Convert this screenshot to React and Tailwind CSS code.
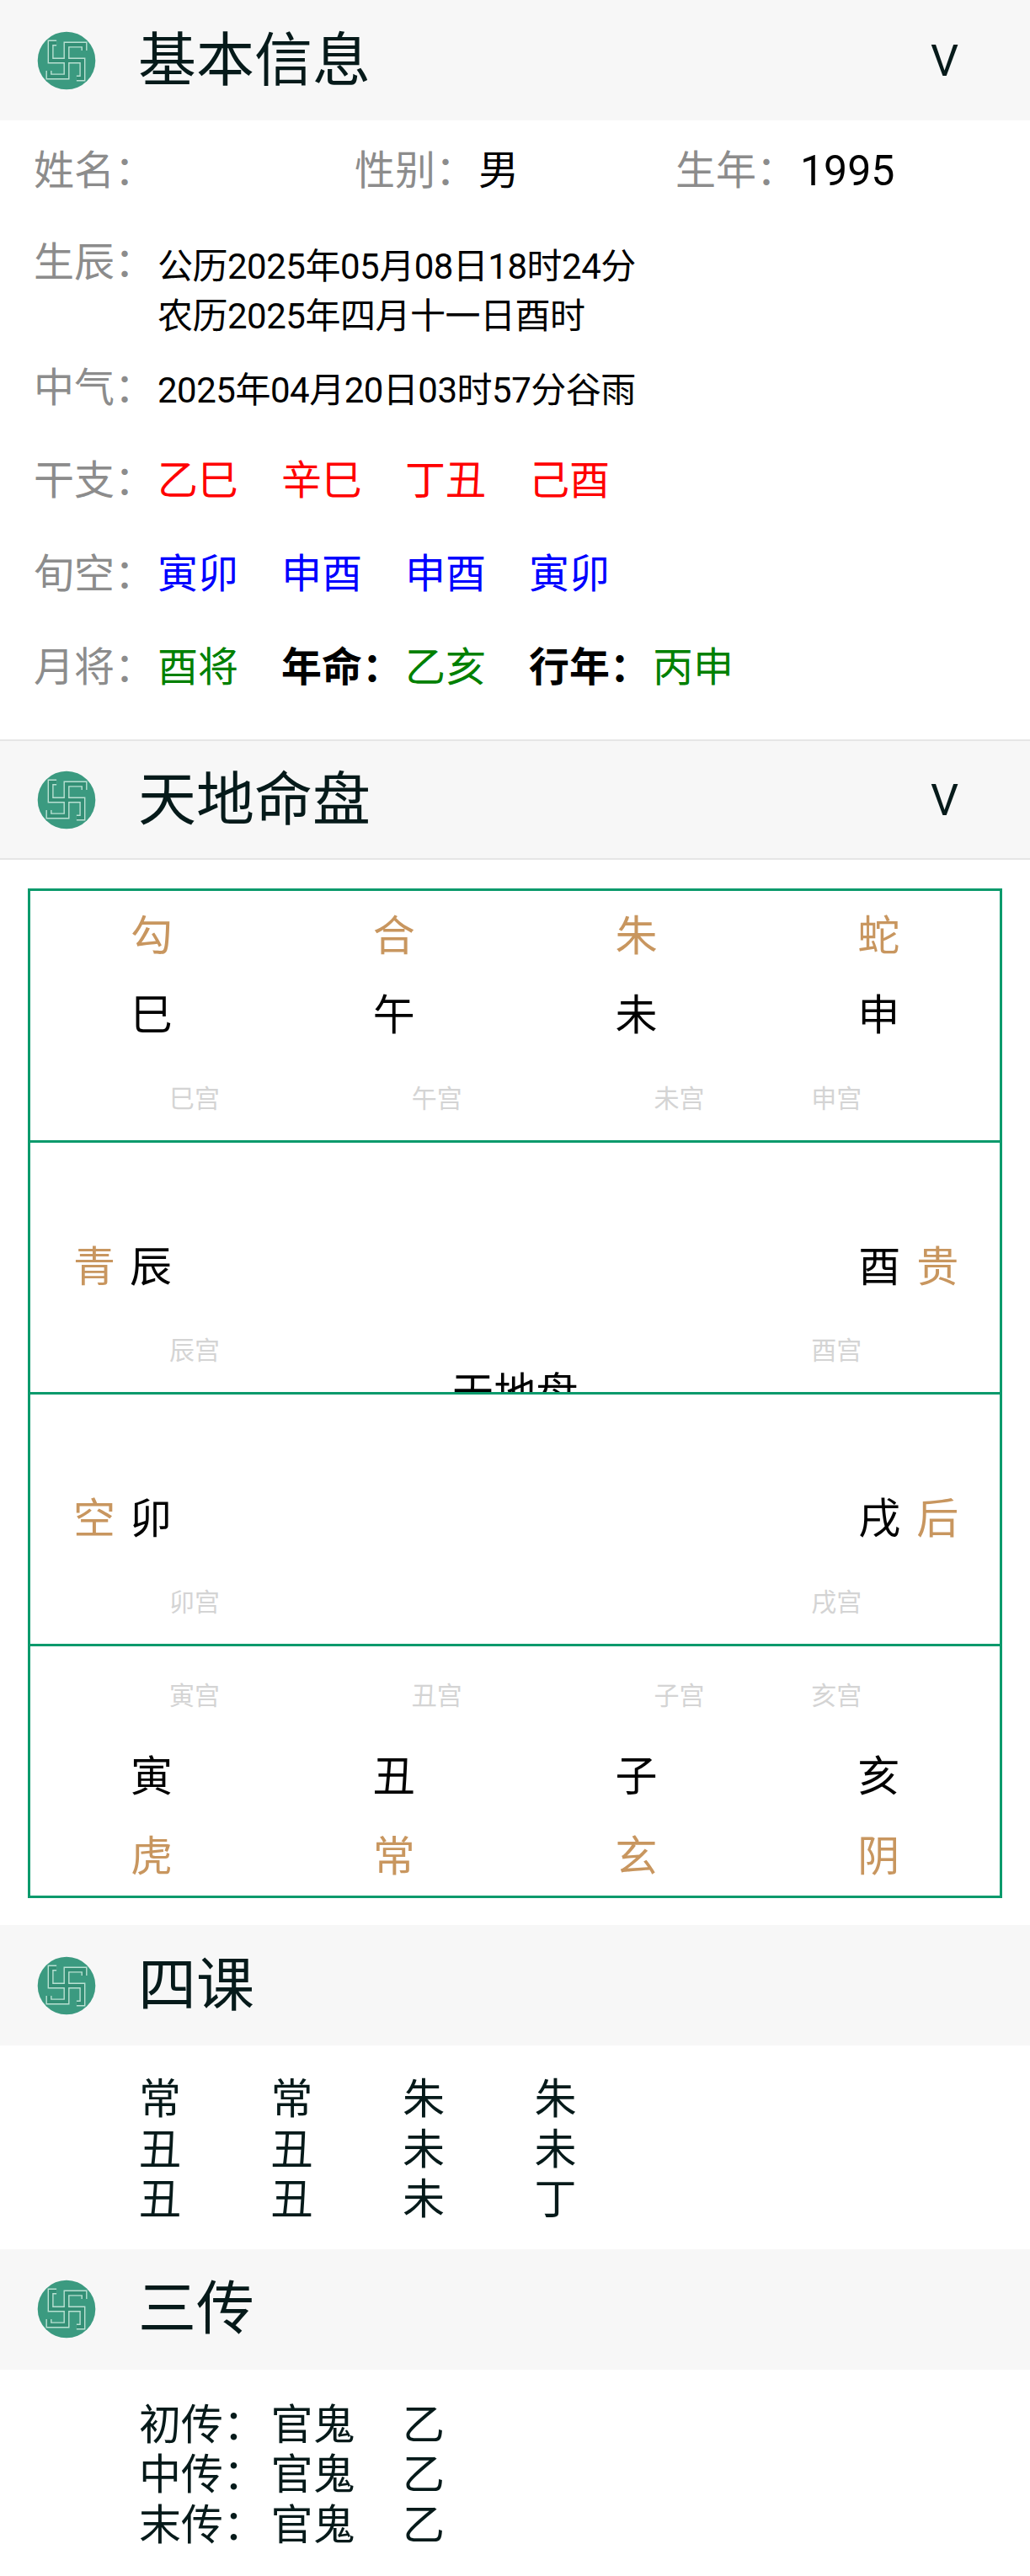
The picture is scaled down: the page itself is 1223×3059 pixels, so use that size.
const Logo = () => (
  <svg viewBox="-50 -50 100 100" className="w-[72px] h-[70px] shrink-0 blur-[0.7px]">
    <circle cx="0" cy="0" r="49" fill="#3b9a80" />
    {[0, 90, 180, 270].map((r) => (
      <path
        key={r}
        transform={`rotate(${r})`}
        d="M0 0 L0 -27 L30 -27 L30 -17"
        fill="none"
        stroke="#b9e0d2"
        strokeWidth="10"
      />
    ))}
    {[0, 90, 180, 270].map((r) => (
      <path
        key={r}
        transform={`rotate(${r})`}
        d="M0 0 L0 -27 L30 -27 L30 -17"
        fill="none"
        stroke="#338f75"
        strokeWidth="6"
      />
    ))}
  </svg>
);

const Header = ({ title, arrow, border }) => (
  <div
    className={`flex items-center h-[143px] bg-[#f7f7f7] pl-[43px] pr-[85px] text-[#061a1a] ${
      border ? "border-y-2 border-[#e6e6e6]" : ""
    }`}
  >
    <Logo />
    <div className="ml-[49px] mt-[2px] text-[69px] leading-[80px]">{title}</div>
    {arrow && <div className="ml-auto mt-[3px] text-[52px] leading-[60px]">V</div>}
  </div>
);

const Label = ({ children }) => (
  <div className="text-[48px] leading-[60px] text-[#8c8c8c]">{children}</div>
);

const ValueRow = ({ label, cells }) => (
  <div className="grid grid-cols-[147px_repeat(5,147px)] text-[48px] leading-[60px]">
    <Label>{label}</Label>
    {cells.map((c, i) => (
      <div key={i} className={c.cls}>
        {c.text}
      </div>
    ))}
  </div>
);

const red = "text-[#ff0000]";
const blue = "text-[#0000ff]";
const green = "text-[#008000]";
const strong = "font-bold text-black";

const Tall = ({ children, cls }) => (
  <div className={`h-[96px] leading-[96px] text-[50px] ${cls}`}>{children}</div>
);

const Palace = ({ name, right }) => (
  <div
    className={`h-[40px] leading-[40px] text-[30px] text-[#d4d4d4] ${
      right ? "pl-[64px]" : "pl-[165px]"
    }`}
  >
    {name}宫
  </div>
);

const tan = "text-[#c8965f]";

const TopCell = ({ god, branch, right }) => (
  <div className="pt-[6px]">
    <Tall cls={`text-center ${tan}`}>{god}</Tall>
    <Tall cls="text-center -mt-[2px]">{branch}</Tall>
    <div className="mt-[31px]">
      <Palace name={branch} right={right} />
    </div>
  </div>
);

const BottomCell = ({ god, branch, right }) => (
  <div className="pt-[39px]">
    <Palace name={branch} right={right} />
    <div className="mt-[28px]">
      <Tall cls="text-center">{branch}</Tall>
      <Tall cls={`text-center -mt-[1px] ${tan}`}>{god}</Tall>
    </div>
  </div>
);

const LeftCell = ({ god, branch }) => (
  <div className="pt-[100px]">
    <div className="flex gap-[17px] pl-[51px]">
      <Tall cls={tan}>{god}</Tall>
      <Tall cls="">{branch}</Tall>
    </div>
    <div className="mt-[31px]">
      <Palace name={branch} />
    </div>
  </div>
);

const RightCell = ({ god, branch }) => (
  <div className="pt-[100px]">
    <div className="flex gap-[19px] pl-[120px]">
      <Tall cls="">{branch}</Tall>
      <Tall cls={tan}>{god}</Tall>
    </div>
    <div className="mt-[31px]">
      <Palace name={branch} right />
    </div>
  </div>
);

const rowCls =
  "grid grid-cols-4 h-[299px] overflow-hidden bg-white border-x-3 border-t-3 border-[#0a9a6c]";

const Board = () => (
  <div className="mx-[33px] mt-[34px]">
    <div className={rowCls}>
      <TopCell god="勾" branch="巳" />
      <TopCell god="合" branch="午" />
      <TopCell god="朱" branch="未" />
      <TopCell god="蛇" branch="申" right />
    </div>
    <div className={rowCls}>
      <LeftCell god="青" branch="辰" />
      <div className="col-span-2 pt-[268px] text-center text-[50px] leading-[60px]">天地盘</div>
      <RightCell god="贵" branch="酉" />
    </div>
    <div className={rowCls}>
      <LeftCell god="空" branch="卯" />
      <div className="col-span-2" />
      <RightCell god="后" branch="戌" />
    </div>
    <div className={`${rowCls} h-[302px] border-b-3`}>
      <BottomCell god="虎" branch="寅" />
      <BottomCell god="常" branch="丑" />
      <BottomCell god="玄" branch="子" />
      <BottomCell god="阴" branch="亥" right />
    </div>
  </div>
);

const lessons = [
  ["常", "常", "朱", "朱"],
  ["丑", "丑", "未", "未"],
  ["丑", "丑", "未", "丁"],
];

const transfers = ["初传", "中传", "末传"];

export default function App() {
  return (
    <div className="w-[1223px] h-[3059px] bg-white text-black overflow-hidden font-[family-name:Roboto,'Noto_Sans_CJK_SC',sans-serif]">
      <Header title="基本信息" arrow />

      <div className="px-[40px] pt-[30px] pb-[55px]">
        <div className="grid grid-cols-3 text-[48px] leading-[60px]">
          <Label>姓名：</Label>
          <div className="flex gap-[3px]">
            <Label>性别：</Label>
            <span>男</span>
          </div>
          <div className="flex gap-[4px]">
            <Label>生年：</Label>
            <span className="text-[50px]">1995</span>
          </div>
        </div>

        <div className="flex mt-[49px]">
          <div className="w-[147px]">
            <Label>生辰：</Label>
          </div>
          <div className="pt-[5px] text-[42px] leading-[59px] tracking-[-0.5px]">
            <div>公历2025年05月08日18时24分</div>
            <div>农历2025年四月十一日酉时</div>
          </div>
        </div>

        <div className="flex mt-[26px]">
          <div className="w-[147px]">
            <Label>中气：</Label>
          </div>
          <div className="pt-[3px] text-[42px] leading-[60px] tracking-[-0.5px]">
            2025年04月20日03时57分谷雨
          </div>
        </div>

        <div className="flex flex-col gap-[51px] mt-[47px]">
          <ValueRow
            label="干支："
            cells={[
              { text: "乙巳", cls: red },
              { text: "辛巳", cls: red },
              { text: "丁丑", cls: red },
              { text: "己酉", cls: red },
            ]}
          />
          <ValueRow
            label="旬空："
            cells={[
              { text: "寅卯", cls: blue },
              { text: "申酉", cls: blue },
              { text: "申酉", cls: blue },
              { text: "寅卯", cls: blue },
            ]}
          />
          <ValueRow
            label="月将："
            cells={[
              { text: "酉将", cls: green },
              { text: "年命：", cls: strong },
              { text: "乙亥", cls: green },
              { text: "行年：", cls: strong },
              { text: "丙申", cls: green },
            ]}
          />
        </div>
      </div>

      <Header title="天地命盘" arrow border />
      <Board />

      <div className="mt-[32px]">
        <Header title="四课" />
      </div>
      <div className="pl-[165px] pt-[35px] pb-[28px] text-[50px] leading-[59.5px] text-[#061a1a]">
        {lessons.map((row, i) => (
          <div key={i} className="grid grid-cols-[repeat(4,156.5px)]">
            {row.map((c, j) => (
              <div key={j}>{c}</div>
            ))}
          </div>
        ))}
      </div>

      <Header title="三传" />
      <div className="pl-[165px] pt-[37px] text-[50px] leading-[59.5px] text-[#061a1a]">
        {transfers.map((t) => (
          <div key={t} className="grid grid-cols-[156.5px_156.5px_156.5px]">
            <div className="whitespace-nowrap">{t}：</div>
            <div>官鬼</div>
            <div>乙</div>
          </div>
        ))}
      </div>
    </div>
  );
}
